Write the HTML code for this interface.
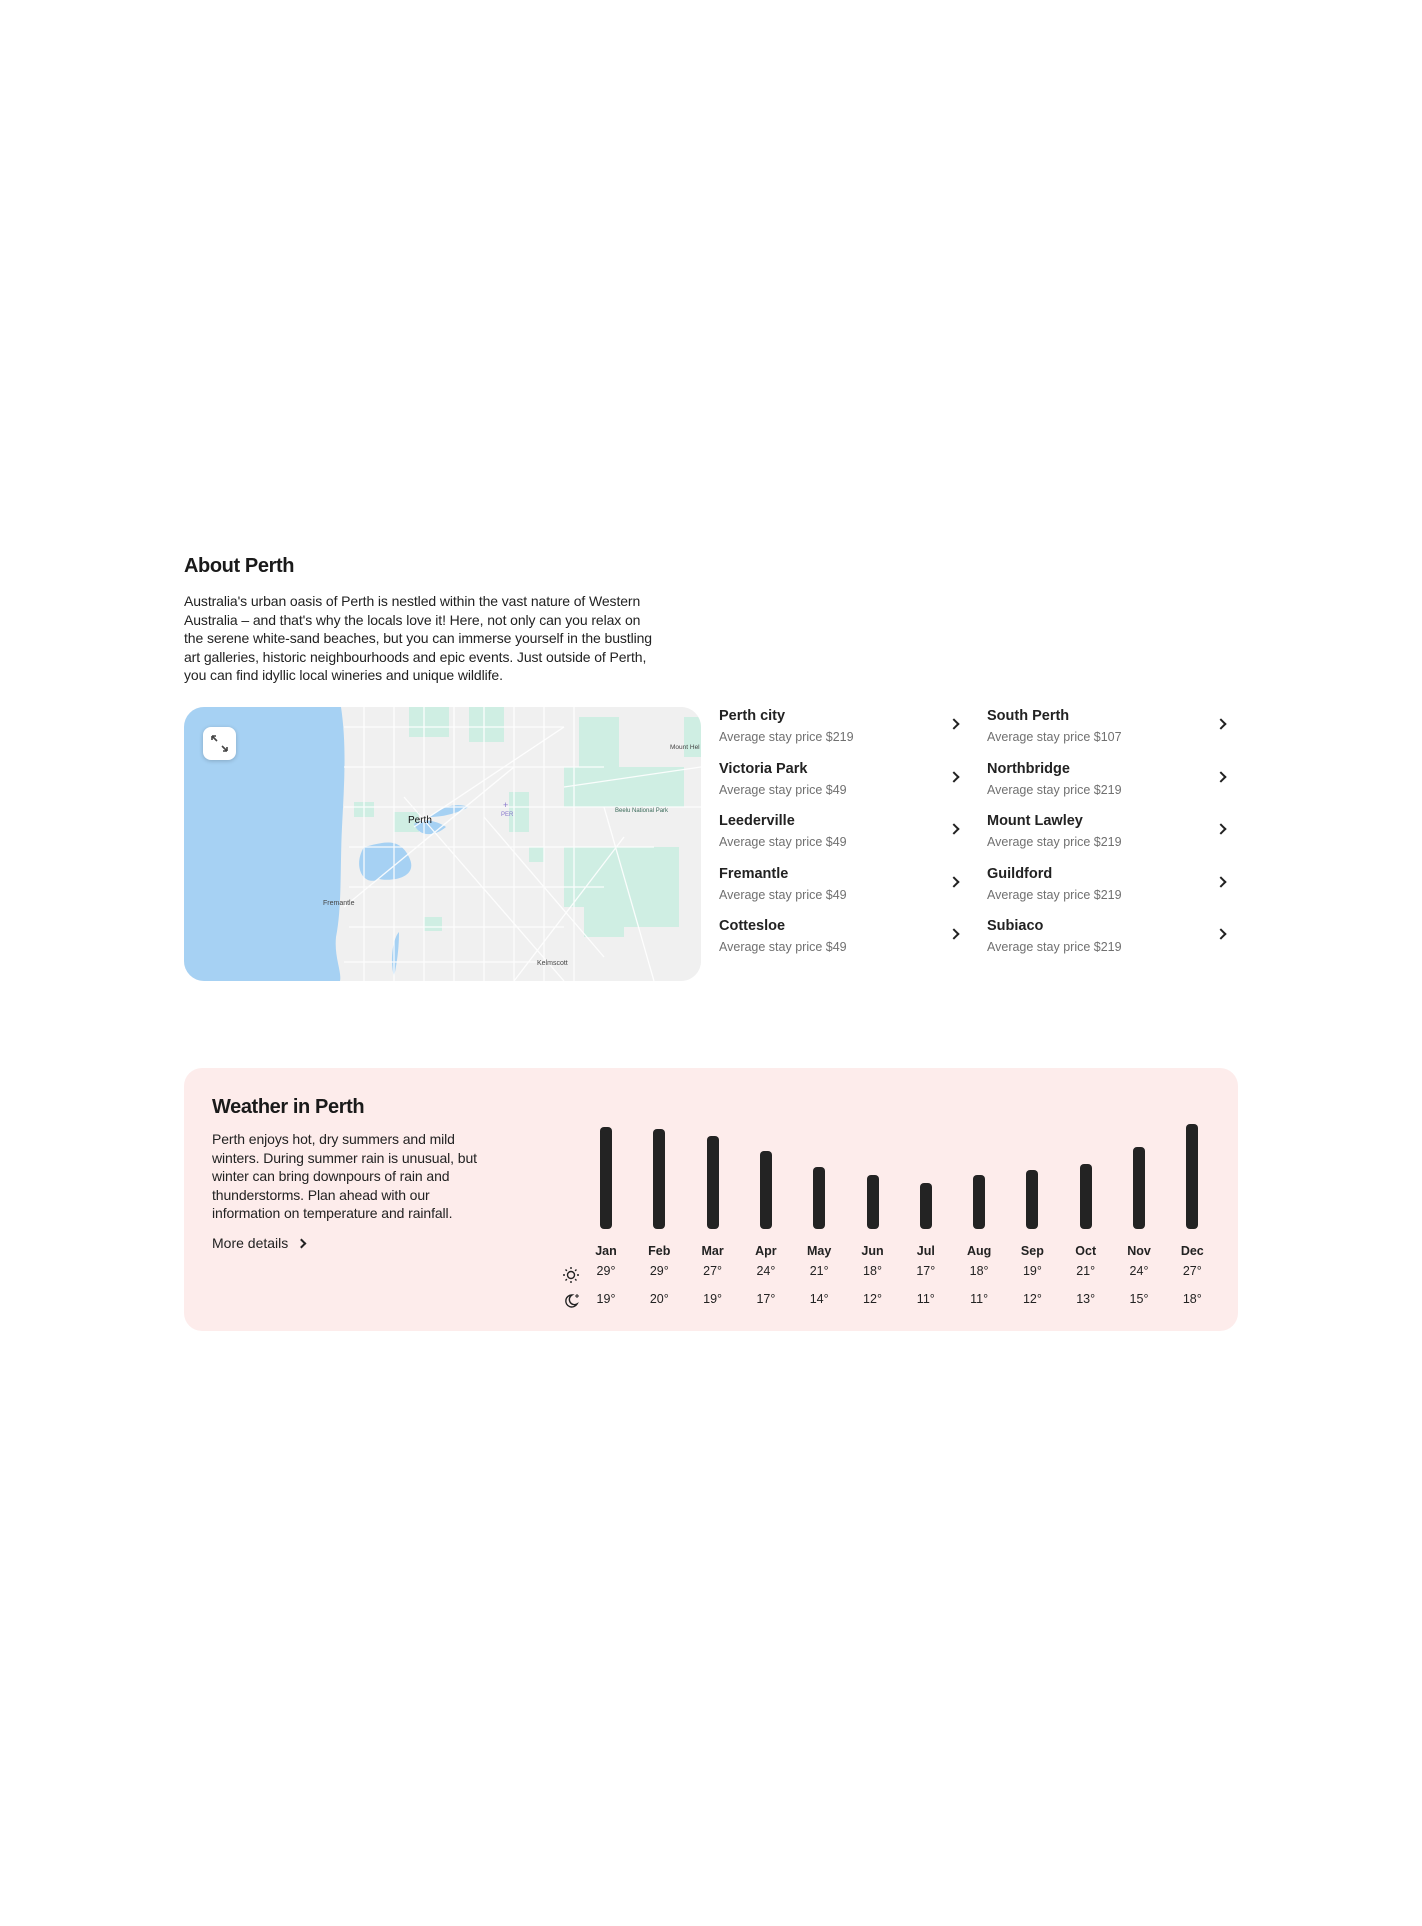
<!DOCTYPE html>
<html><head><meta charset="utf-8"><style>
*{margin:0;padding:0;box-sizing:border-box}
body{width:1422px;height:1926px;background:#fff;font-family:"Liberation Sans",sans-serif;color:#222;position:relative;overflow:hidden}
.abs{position:absolute}
h2{position:absolute;font-size:20px;font-weight:bold;letter-spacing:-0.4px;color:#1a1a1a}
.p{font-size:14px;line-height:18.6px;color:#222;white-space:nowrap;letter-spacing:-0.1px}
.nm{font-size:14.5px;font-weight:bold;color:#222;white-space:nowrap}
.pr{font-size:12.5px;color:#707070;white-space:nowrap}
.chev{position:absolute;width:8px;height:8px;border-right:2px solid #222;border-top:2px solid #222;transform:rotate(45deg)}
.mo{position:absolute;width:40px;text-align:center;font-size:12.5px}
</style></head><body>
<h2 style="left:184px;top:555px">About Perth</h2>
<div class="abs p" style="left:184px;top:592px">Australia's urban oasis of Perth is nestled within the vast nature of Western<br>Australia – and that's why the locals love it! Here, not only can you relax on<br>the serene white-sand beaches, but you can immerse yourself in the bustling<br>art galleries, historic neighbourhoods and epic events. Just outside of Perth,<br>you can find idyllic local wineries and unique wildlife.</div>

<div class="abs" style="left:184px;top:707px;width:517px;height:274px;border-radius:20px;overflow:hidden;background:#efefef">
<svg width="517" height="274" viewBox="0 0 517 274">
<rect width="517" height="274" fill="#f0f0f0"/>
<g fill="#cfeee3">
<rect x="225" y="0" width="40" height="30"/><rect x="285" y="0" width="35" height="35"/><rect x="395" y="10" width="40" height="50"/><rect x="380" y="60" width="60" height="40"/><rect x="440" y="60" width="60" height="40"/><rect x="380" y="140" width="60" height="60"/><rect x="440" y="140" width="55" height="80"/><rect x="400" y="200" width="40" height="30"/><rect x="210" y="105" width="25" height="20"/><rect x="170" y="95" width="20" height="15"/><rect x="325" y="85" width="20" height="40"/><rect x="345" y="140" width="15" height="15"/><rect x="240" y="210" width="18" height="14"/><rect x="500" y="10" width="17" height="40"/></g>
<g fill="#a6d1f3">
<path d="M0 0H157C163 40 160 80 158 120 156 160 158 200 152 230 150 250 158 265 156 274H0Z"/>
<path d="M180 140C200 135 215 130 225 150 235 170 210 175 195 172 180 180 168 160 180 140Z"/>
<path d="M230 117C240 110 255 115 262 120 250 130 235 130 230 117Z"/>
<path d="M245 110C260 100 270 95 285 100 275 105 262 110 245 110Z"/>
<path d="M210 270C205 250 210 230 215 225 215 245 212 260 210 270Z"/>
</g>
<g stroke="#fff" stroke-width="1.3" fill="none" opacity=".9">
<path d="M160 20H380M160 60H420M160 100H517M165 140H470M165 180H420M165 220H380M160 255H380"/>
<path d="M180 0V274M210 0V274M240 0V274M270 0V274M300 0V274M330 0V274M360 0V274M390 0V274"/>
<path d="M220 90L380 274M230 120L380 20M160 200L330 60M300 110L420 250M330 274L440 130M380 80L517 60M420 100L470 274"/>
</g>
<text x="224" y="116" font-size="10" fill="#111" font-family="Liberation Sans">Perth</text>
<text x="139" y="198" font-size="7" fill="#444" font-family="Liberation Sans">Fremantle</text>
<text x="353" y="258" font-size="7" fill="#444" font-family="Liberation Sans">Kelmscott</text>
<text x="486" y="42" font-size="6.5" fill="#444" font-family="Liberation Sans">Mount Hel</text>
<text x="431" y="105" font-size="6" fill="#3a6b5a" font-family="Liberation Sans">Beelu National Park</text>
<text x="317" y="109" font-size="6" fill="#8877cc" font-family="Liberation Sans">PER</text>
<text x="319" y="101" font-size="9" fill="#8877cc" font-family="Liberation Sans">+</text>
</svg>
<div class="abs" style="left:19px;top:20px;width:33px;height:33px;background:#fff;border-radius:8px;box-shadow:0 1px 4px rgba(0,0,0,.2)">
<svg width="33" height="33" viewBox="0 0 33 33" stroke="#444" stroke-width="1.6" fill="none"><path d="M9 9L14 14M9 9H13M9 9V13M24 24L19 19M24 24H20M24 24V20"/></svg></div>
</div>

<div class="abs" style="left:719px;top:708px">
<div class="abs nm" style="top:0">Perth city</div><div class="abs pr" style="top:22px">Average stay price $219</div>
<div class="abs nm" style="top:53px">Victoria Park</div><div class="abs pr" style="top:75px">Average stay price $49</div>
<div class="abs nm" style="top:105px">Leederville</div><div class="abs pr" style="top:127px">Average stay price $49</div>
<div class="abs nm" style="top:158px">Fremantle</div><div class="abs pr" style="top:180px">Average stay price $49</div>
<div class="abs nm" style="top:210px">Cottesloe</div><div class="abs pr" style="top:232px">Average stay price $49</div>
</div>
<div class="abs" style="left:987px;top:708px">
<div class="abs nm" style="top:0">South Perth</div><div class="abs pr" style="top:22px">Average stay price $107</div>
<div class="abs nm" style="top:53px">Northbridge</div><div class="abs pr" style="top:75px">Average stay price $219</div>
<div class="abs nm" style="top:105px">Mount Lawley</div><div class="abs pr" style="top:127px">Average stay price $219</div>
<div class="abs nm" style="top:158px">Guildford</div><div class="abs pr" style="top:180px">Average stay price $219</div>
<div class="abs nm" style="top:210px">Subiaco</div><div class="abs pr" style="top:232px">Average stay price $219</div>
</div>
<div class="chev" style="left:950px;top:720px"></div><div class="chev" style="left:950px;top:773px"></div><div class="chev" style="left:950px;top:825px"></div><div class="chev" style="left:950px;top:878px"></div><div class="chev" style="left:950px;top:930px"></div>
<div class="chev" style="left:1217px;top:720px"></div><div class="chev" style="left:1217px;top:773px"></div><div class="chev" style="left:1217px;top:825px"></div><div class="chev" style="left:1217px;top:878px"></div><div class="chev" style="left:1217px;top:930px"></div>

<div class="abs" style="left:184px;top:1068px;width:1054px;height:263px;background:#fdeceb;border-radius:18px"></div>
<h2 style="left:212px;top:1096px">Weather in Perth</h2>
<div class="abs p" style="left:212px;top:1130px">Perth enjoys hot, dry summers and mild<br>winters. During summer rain is unusual, but<br>winter can bring downpours of rain and<br>thunderstorms. Plan ahead with our<br>information on temperature and rainfall.</div>
<div class="abs" style="left:212px;top:1235px;font-size:14px">More details</div>
<div class="chev" style="left:298px;top:1240px;width:7px;height:7px"></div>

<svg class="abs" style="left:560px;top:1264px" width="24" height="50" viewBox="0 0 24 50" fill="none" stroke="#222" stroke-width="1.4">
<circle cx="11" cy="11" r="3.5"/><path d="M11 3v2M11 17v2M3 11h2M17 11h2M5.5 5.5l1.4 1.4M15.1 15.1l1.4 1.4M5.5 16.5l1.4-1.4M15.1 6.9l1.4-1.4"/>
<path d="M12 31a6 6 0 1 0 5 9a5 5 0 0 1-5-9z"/><path d="M17 30v4M15 32h4" stroke-width="1"/>
</svg>

<div id="wx"></div>
<script>
(function(){
var m=["Jan","Feb","Mar","Apr","May","Jun","Jul","Aug","Sep","Oct","Nov","Dec"],
hi=[29,29,27,24,21,18,17,18,19,21,24,27],lo=[19,20,19,17,14,12,11,11,12,13,15,18],
tp=[1127,1129,1136,1151,1167,1175,1183,1175,1170,1164,1147,1124],h="";
for(var i=0;i<12;i++){var x=606+i*53.3;
h+='<div class="abs" style="left:'+(x-6)+'px;top:'+tp[i]+'px;width:12px;height:'+(1229-tp[i])+'px;background:#232323;border-radius:4px"></div>';
h+='<div class="mo" style="left:'+(x-20)+'px;top:1244px;font-weight:bold">'+m[i]+'</div>';
h+='<div class="mo" style="left:'+(x-20)+'px;top:1264px">'+hi[i]+'°</div>';
h+='<div class="mo" style="left:'+(x-20)+'px;top:1292px">'+lo[i]+'°</div>';}
document.getElementById("wx").innerHTML=h;
})();
</script>
</body></html>
